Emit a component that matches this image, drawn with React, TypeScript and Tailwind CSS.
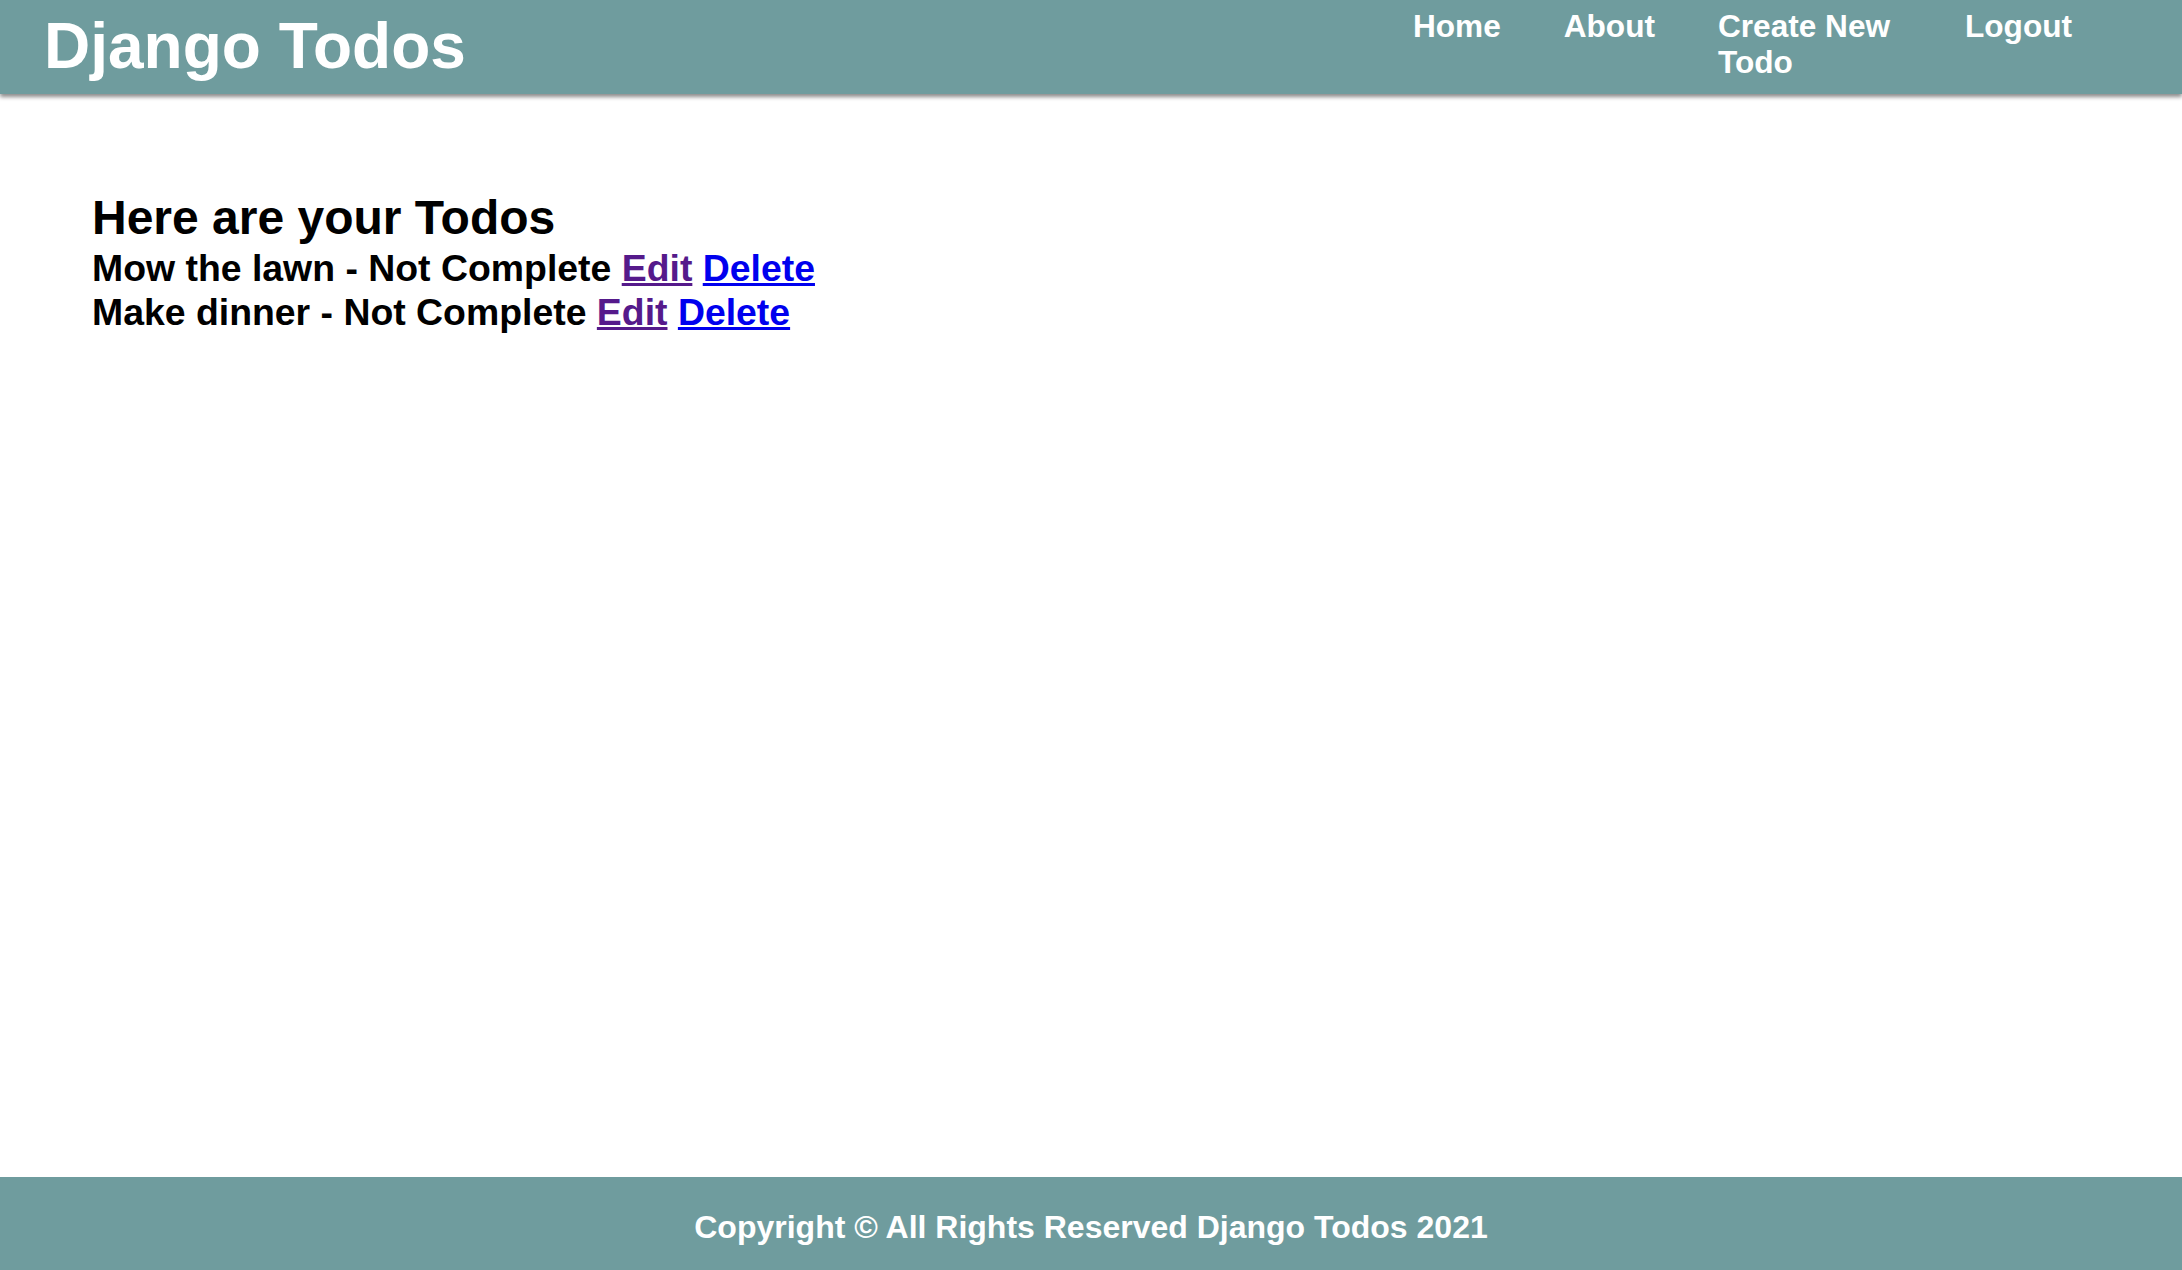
import React from "react";

const font = { fontFamily: '"Liberation Sans", Arial, Helvetica, sans-serif' };

const todos = [
  { title: "Mow the lawn", done: false },
  { title: "Make dinner", done: false },
];

export default function App() {
  return (
    <div className="min-h-screen flex flex-col bg-white" style={font}>
      <header className="relative z-10 h-[94px] bg-[#6f9c9e] shadow-[0_3px_4px_rgba(0,0,0,0.45)] flex justify-between items-start pl-[44px] pr-[110px] pt-[10px]">
        <h1 className="text-[64px] font-bold text-white leading-[72px] m-0">Django Todos</h1>
        <nav className="-mt-[2px]">
          <ul className="flex items-start gap-[63px] text-[31.6px] font-bold text-white leading-[36px]">
            <li><a href="#">Home</a></li>
            <li><a href="#">About</a></li>
            <li className="w-[184px]"><a href="#">Create New Todo</a></li>
            <li><a href="#">Logout</a></li>
          </ul>
        </nav>
      </header>
      <main className="flex-1 pl-[92px] pt-[96px]">
        <h2 className="text-[48px] font-bold text-black leading-[56px]">Here are your Todos</h2>
        {todos.map((t) => (
          <h3 key={t.title} className="text-[37.4px] font-bold text-black leading-[44px]">
            {t.title} - {t.done ? "Complete" : "Not Complete"}{" "}
            <a href="#" className="text-[#551a8b] underline">Edit</a>{" "}
            <a href="#" className="text-[#0000ee] underline">Delete</a>
          </h3>
        ))}
      </main>
      <footer className="h-[93px] bg-[#6f9c9e] flex items-center justify-center pt-[8px]">
        <h3 className="text-[32px] font-bold text-white leading-[37px]">
          Copyright © All Rights Reserved Django Todos 2021
        </h3>
      </footer>
    </div>
  );
}
